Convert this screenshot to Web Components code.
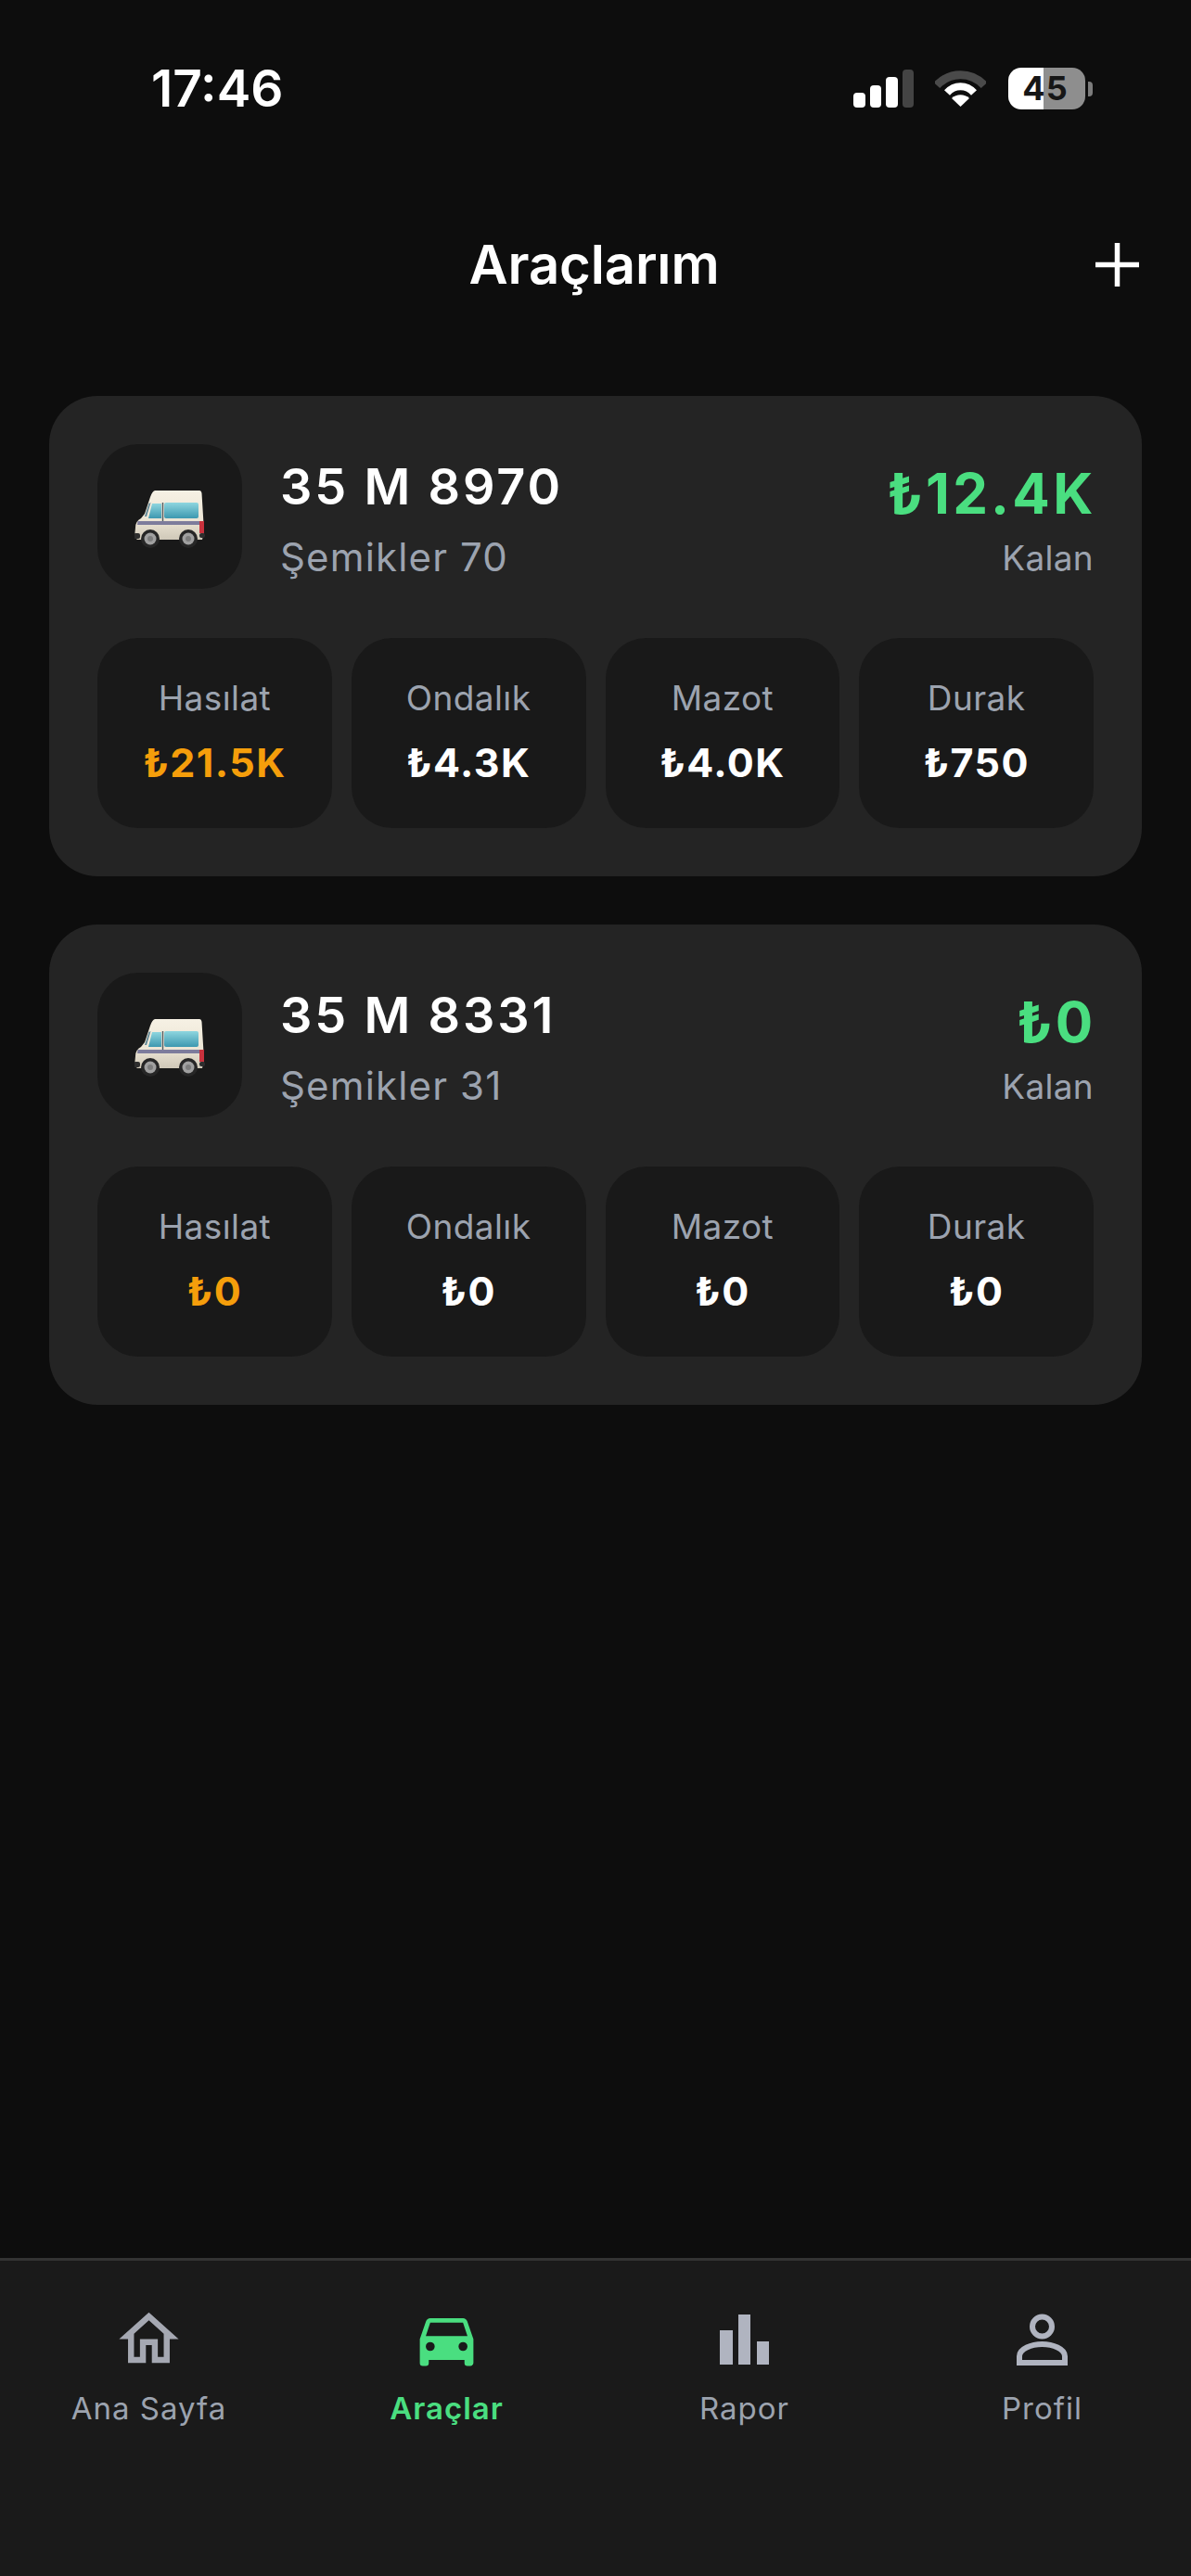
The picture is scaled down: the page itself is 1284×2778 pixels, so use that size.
<!DOCTYPE html>
<html lang="tr"><head><meta charset="utf-8"><title>Araçlarım</title>
<style>
html,body{margin:0;padding:0;background:#0d0d0d;color:#fff;font-family:Inter,"Liberation Sans",sans-serif}
body{height:2778px;display:flex;flex-direction:column;overflow:hidden}
app-main{flex:1}
</style></head><body>
<status-bar></status-bar>
<app-header title="Araçlarım"></app-header>
<app-main>
  <vehicle-card plate="35 M 8970" route="Şemikler 70" left="₺12.4K">
    <stat-tile label="Hasılat" tone="orange">₺21.5K</stat-tile>
    <stat-tile label="Ondalık">₺4.3K</stat-tile>
    <stat-tile label="Mazot">₺4.0K</stat-tile>
    <stat-tile label="Durak">₺750</stat-tile>
  </vehicle-card>
  <vehicle-card plate="35 M 8331" route="Şemikler 31" left="₺0">
    <stat-tile label="Hasılat" tone="orange">₺0</stat-tile>
    <stat-tile label="Ondalık">₺0</stat-tile>
    <stat-tile label="Mazot">₺0</stat-tile>
    <stat-tile label="Durak">₺0</stat-tile>
  </vehicle-card>
</app-main>
<tab-bar>
  <tab-item label="Ana Sayfa" icon="home"></tab-item>
  <tab-item label="Araçlar" icon="car" active></tab-item>
  <tab-item label="Rapor" icon="bars"></tab-item>
  <tab-item label="Profil" icon="user"></tab-item>
</tab-bar>
<script>
const def=(name,html)=>{customElements.define(name,class extends HTMLElement{
  constructor(){super();this.attachShadow({mode:'open'})}
  connectedCallback(){const a=n=>this.getAttribute(n)||'';this.shadowRoot.innerHTML=typeof html==='function'?html(a,this):html}
})};
def('status-bar',`<style>
:host{display:flex;height:160px;box-sizing:border-box;padding:73px 114px 0 163px;justify-content:space-between;align-items:flex-start}
.t{font:600 55px/44px Inter,"Liberation Sans",sans-serif;color:#fff;letter-spacing:0}
.r{display:flex}
svg{display:block}
.bat{position:relative}
.n{font:700 36px/45px Inter,"Liberation Sans",sans-serif;color:#161616;position:absolute;left:15px;top:0;width:50px;text-align:center;letter-spacing:1px}
.b{display:flex;width:83px;height:45px;border-radius:14px;overflow:hidden}
.b i{display:block;height:45px}
.nub{position:absolute;left:86px;top:15px;width:5px;height:16px;border-radius:0 4px 4px 0;background:#7c7c7c}
</style><div class="t">17:46</div><div class="r">
<svg width="65" height="45" style="margin-right:23px"><rect x="0" y="27" width="13" height="16" rx="4" fill="#fff"/><rect x="18" y="19" width="12" height="24" rx="4" fill="#fff"/><rect x="35" y="10" width="13" height="33" rx="4" fill="#fff"/><rect x="53" y="2" width="12" height="41" rx="4" fill="#444"/></svg>
<svg width="55" height="45" viewBox="0 0 55 45" style="margin-right:24px"><path d="M2 19C16 4 39 4 53 19" fill="none" stroke="#4a4a4a" stroke-width="9"/><path d="M13 27C21 18 34 18 42 27" fill="none" stroke="#fff" stroke-width="8"/><path d="M27.500 42L18 33C23 28 32 28 37 33Z" fill="#fff"/></svg>
<div class="bat"><div class="b"><i style="width:38px;background:#fff"></i><i style="width:45px;background:#8e8e8e"></i></div><div class="n">45</div><div class="nub"></div></div>
</div>`);
def('app-header',a=>`<style>
:host{display:grid;grid-template-columns:1fr auto 1fr;align-items:center;height:250px;padding:0 56px 0 53px}
h1{margin:0;font:600 58px/70px Inter,"Liberation Sans",sans-serif;color:#fff;letter-spacing:-.15px}
svg{justify-self:end;display:block}
</style><span></span><h1>${a('title')}</h1><svg width="47" height="47" viewBox="0 0 47 47"><path d="M23.500 0V47M0 23.500H47" stroke="#fff" stroke-width="5.500" fill="none"/></svg>`);
customElements.define('app-main',class extends HTMLElement{constructor(){super();this.attachShadow({mode:'open'}).innerHTML=`<style>:host{display:flex;flex-direction:column;gap:52px;padding:17px 53px 0}</style><slot></slot>`}});
def('van-glyph',`<style>:host{display:block;width:76px;height:62px;margin-top:6px}svg{display:block}</style>
<svg width="76" height="62" viewBox="0 0 76 62">
<defs><linearGradient id="g" x1="0" y1="0" x2="0" y2="1"><stop offset="0" stop-color="#f6f1e4"/><stop offset=".6" stop-color="#ece5d5"/><stop offset="1" stop-color="#cfc8b8"/></linearGradient>
<linearGradient id="w" x1="0" y1="0" x2="0" y2="1"><stop offset="0" stop-color="#8ed6df"/><stop offset="1" stop-color="#3d98b0"/></linearGradient></defs>
<path d="M22 0H70Q72 0 72.500 3L75 44L73 53H3L0 50L1 40Q1 33 7 30L11 25L17 7Q19 1 22 0Z" fill="url(#g)"/>
<path d="M3.500 33H72V37H3Z" fill="#7d7c9c"/>
<rect x="32" y="13" width="37" height="17" rx="2" fill="url(#w)"/>
<path d="M19 14H29V30H15Z" fill="url(#w)"/>
<path d="M17.500 13L15.500 14L11 28H13Z" fill="#5d8494"/>
<path d="M30.500 13V33" stroke="#4f5a60" stroke-width="1.400"/>
<rect x="70" y="33" width="5" height="13" fill="#c9323d"/>
<rect x="-1" y="46" width="7" height="6" rx="2" fill="#2e2e2e"/>
<rect x="70" y="46" width="6" height="5" rx="2" fill="#2e2e2e"/>
<circle cx="17" cy="52" r="10" fill="#262626"/><circle cx="17" cy="52" r="6.500" fill="#a0a0a0"/><circle cx="17" cy="52" r="3" fill="#7d7d7d"/>
<circle cx="58" cy="52" r="10" fill="#262626"/><circle cx="58" cy="52" r="6.500" fill="#a0a0a0"/><circle cx="58" cy="52" r="3" fill="#7d7d7d"/>
</svg>`);
def('vehicle-card',a=>`<style>
:host{display:block;box-sizing:border-box;height:518px;padding:52px;background:#242424;border-radius:52px}
.head{display:flex;align-items:flex-start;height:156px;margin-bottom:53px}
.ic{width:156px;height:156px;border-radius:44px;background:#191919;display:flex;align-items:center;justify-content:center;margin-right:41px;flex:none}
.info{flex:1;padding-top:16px}
.plate{font:600 54px/60px Inter,"Liberation Sans",sans-serif;letter-spacing:2.850px;color:#fff}
.route{font:400 42px/56px Inter,"Liberation Sans",sans-serif;color:#9ca3af;margin-top:18px;letter-spacing:1.150px}
.side{text-align:right;padding-top:20px}
.amt{font:700 60px/66px Inter,"Liberation Sans",sans-serif;color:#4ade80;letter-spacing:3.200px;margin-right:-2.500px}
.k{font:400 37px/50px Inter,"Liberation Sans",sans-serif;color:#9ca3af;margin-top:12px;letter-spacing:.3px}
.tiles{display:grid;grid-template-columns:repeat(4,1fr);gap:21px}
</style><div class="head"><div class="ic"><van-glyph></van-glyph></div>
<div class="info"><div class="plate">${a('plate')}</div><div class="route">${a('route')}</div></div>
<div class="side"><div class="amt">${a('left')}</div><div class="k">Kalan</div></div></div>
<div class="tiles"><slot></slot></div>`);
def('stat-tile',a=>`<style>
:host{display:flex;flex-direction:column;align-items:center;box-sizing:border-box;height:205px;padding-top:40px;background:#191919;border-radius:44px}
.l{font:400 37px/50px Inter,"Liberation Sans",sans-serif;color:#9ca3af;letter-spacing:.4px}
.v{font:700 43px/54px Inter,"Liberation Sans",sans-serif;margin-top:17px;letter-spacing:1.400px;color:${a('tone')==='orange'?'#f59e0b':'#fff'}}
</style><div class="l">${a('label')}</div><div class="v"><slot></slot></div>`);
customElements.define('tab-bar',class extends HTMLElement{constructor(){super();this.attachShadow({mode:'open'}).innerHTML=`<style>:host{display:grid;grid-template-columns:repeat(4,1fr);box-sizing:border-box;height:343px;padding:46px 0 0;margin:0;background:#1a1a1a;border-top:3px solid #333;align-items:start}</style><slot></slot>`}});
const ICONS={
home:`<svg width="77" height="77" viewBox="0 0 24 24"><path fill="#a5a8b2" d="M12 5.690L17 10.190V18H15V12H9V18H7V10.190L12 5.690M12 3L2 12H5V20H11V14H13V20H19V12H22L12 3Z"/></svg>`,
car:`<svg width="77" height="77" viewBox="0 0 24 24"><path fill="#4ade80" d="M5,11L6.500,6.500H17.500L19,11M17.500,16A1.500,1.500 0 0,1 16,14.500A1.500,1.500 0 0,1 17.500,13A1.500,1.500 0 0,1 19,14.500A1.500,1.500 0 0,1 17.500,16M6.500,16A1.500,1.500 0 0,1 5,14.500A1.500,1.500 0 0,1 6.500,13A1.500,1.500 0 0,1 8,14.500A1.500,1.500 0 0,1 6.500,16M18.920,6C18.720,5.420 18.160,5 17.500,5H6.500C5.840,5 5.280,5.420 5.080,6L3,12V20A1,1 0 0,0 4,21H5A1,1 0 0,0 6,20V19H18V20A1,1 0 0,0 19,21H20A1,1 0 0,0 21,20V12L18.920,6Z"/></svg>`,
bars:`<svg width="77" height="77" viewBox="0 0 77 77"><g fill="#b0b4c0"><rect x="12" y="29" width="14" height="37"/><rect x="32" y="12" width="13" height="54"/><rect x="52" y="41" width="13" height="25"/></g></svg>`,
user:`<svg width="77" height="77" viewBox="0 0 77 77"><g fill="none" stroke="#b0b4c0" stroke-width="6"><circle cx="38.500" cy="25" r="10.500"/><path d="M14 64V57C14 49 27 44 38.500 44S63 49 63 57V64Z"/></g></svg>`};
def('tab-item',(a,el)=>`<style>
:host{display:flex;flex-direction:column;align-items:center}
svg{display:block}
.l{font:${el.hasAttribute('active')?'600':'400'} 33px/44px Inter,"Liberation Sans",sans-serif;letter-spacing:1px;color:${el.hasAttribute('active')?'#4ade80':'#9ca3af'};margin-top:14px}
</style>${ICONS[a('icon')]}<div class="l">${a('label')}</div>`);
</script>
</body></html>
